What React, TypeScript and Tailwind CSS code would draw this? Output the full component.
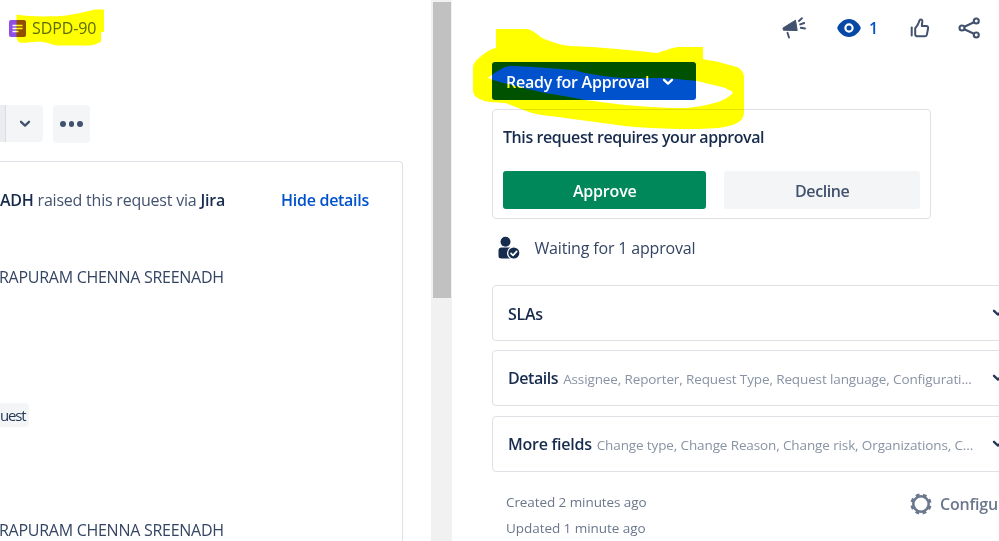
import { ReactNode } from 'react';

interface FieldPanel {
  title: string;
  titleClass: string;
  summary?: string;
}

const panels: FieldPanel[] = [
  { title: 'SLAs', titleClass: 'tracking-[-0.3px]' },
  {
    title: 'Details',
    titleClass: 'tracking-[-0.45px]',
    summary: 'Assignee, Reporter, Request Type, Request language, Configurati...'
  },
  {
    title: 'More fields',
    titleClass: 'tracking-[-0.25px]',
    summary: 'Change type, Change Reason, Change risk, Organizations, C...'
  }
];

function Chevron({ className }: { className?: string }) {
  return (
    <svg width="12" height="8" viewBox="0 0 12 8" fill="none" className={className}>
      <path d="M2 1.8 6 5.6l4-3.8" stroke="currentColor" strokeWidth="2.3" strokeLinecap="round" strokeLinejoin="round" />
    </svg>
  );
}

function MegaphoneIcon() {
  return (
    <svg width="24" height="24" viewBox="0 0 24 24" fill="none" className="text-[#42526e]">
      <path d="M13.500 4.200 15.200 14.500 1.400 14.200 1 12z" fill="currentColor" stroke="currentColor" strokeLinejoin="round" />
      <path d="m5.500 16.800 1.500 4.700M17 5l2.900-2.800M18.200 8.400l4-1.400M18.800 11.800l4.200.7" stroke="currentColor" strokeWidth="1.900" strokeLinecap="round" />
    </svg>
  );
}

function EyeIcon() {
  return (
    <svg width="24" height="20" viewBox="0 0 24 20">
      <path d="M12 1C6.500 1 2 5.500.5 9c-.3.700-.3 1.300 0 2C2 14.500 6.500 19 12 19s10-4.500 11.500-8c.3-.7.3-1.300 0-2C22 5.500 17.500 1 12 1z" fill="#0747a6" />
      <circle cx="12" cy="10" r="3.600" fill="#0747a6" stroke="#fff" strokeWidth="2.200" />
    </svg>
  );
}

function ThumbIcon() {
  return (
    <svg width="20" height="20" viewBox="0 0 20 20" fill="none" stroke="#42526e" strokeWidth="2" strokeLinecap="round" strokeLinejoin="round">
      <path d="M1.700 9.500v8" />
      <path d="M5.200 10.300v6c0 1.200.8 2 2 2h7.600c1.100 0 1.900-.7 2.100-1.700l1.200-6.400c.2-1.200-.6-2.200-1.800-2.200h-4.500l.5-4.300c.1-1.300-.5-2.300-1.500-2.300-.8 0-1.200.5-1.400 1.300C8.800 5.400 7.800 7 5.200 10.300z" />
    </svg>
  );
}

function ShareIcon() {
  return (
    <svg width="24" height="22" viewBox="0 0 24 22" fill="none" stroke="#42526e" strokeWidth="2.100">
      <circle cx="4" cy="11" r="2.500" />
      <circle cx="18.300" cy="4" r="2.500" />
      <circle cx="18.300" cy="18" r="2.500" />
      <path d="m6.400 9.800 9.500-4.600M6.400 12.200l9.500 4.600" />
    </svg>
  );
}

function ApproverIcon() {
  return (
    <svg width="23" height="24" viewBox="0 0 23 24">
      <circle cx="7.500" cy="5.700" r="5" fill="#172b4d" />
      <path d="M.5 14.500c0-1.900 1.200-3 3-3h8.500v11H3.500c-1.900 0-3-.8-3-2.500z" fill="#172b4d" />
      <circle cx="15.800" cy="17" r="6.200" fill="#172b4d" stroke="#fff" strokeWidth="1.300" />
      <path d="m13 17.300 2 2 3.700-4" fill="none" stroke="#fff" strokeWidth="1.700" strokeLinecap="round" strokeLinejoin="round" />
    </svg>
  );
}

function GearIcon() {
  return (
    <svg width="22" height="22" viewBox="-11 -11 22 22" fill="none" stroke="#6b778c">
      <circle r="7.700" strokeWidth="2.500" />
      <circle r="9.300" strokeWidth="2.600" strokeDasharray="3.800 3.504" strokeDashoffset="-1.752" />
    </svg>
  );
}

function ToolbarSlot({ className, children }: { className: string; children: ReactNode }) {
  return <button className={`flex h-6 items-center ${className}`}>{children}</button>;
}

/* Marker strokes drawn over the page */
function Highlights() {
  return (
    <svg width="999" height="541" viewBox="0 0 999 541" fill="#ffff00" className="pointer-events-none absolute inset-0 mix-blend-multiply">
      <path d="M16.500 14.500C32 17 48 16.500 60 16c12-.6 24-4 35-6.500h9V32h-3v10c-4 1.500-7 3-11 3.500H60c-8 0-12-3.500-20-3.800-7-.4-14 1.500-20 1-2-1-3.500-3-3.500-6z" />
      <path
        fillRule="evenodd"
        d="M496 29h31c8 2 10 6 17 10 9 3 16 6 26 7 30 1 58 4 87 7 8-2 13-5 21-6h25v12c8 2 13 2 19 4l15 4c4 2 7 5 7 10v35c0 6-3 9-7 11-6 3-12 4-19 5-14 1-26 1-40 1-18-1-35-1-53-3-20-3-40-5-60-8-12-2-22-2-33-5-10-3-18-7-27-10-9-1-17 0-23-3-6-2-9-5-9-10V68c0-4 3-8 7-11 5-4 10-8 16-9z
        M488 78c5-4 10-8 17-11 3-1 6-1 10-1 19 1 38 2 57 4 5 0 8 2 13 3 12 2 25 4 37 5h41c8 0 15 1 22 2 7 0 14 1 20 3l17 4c5 2 9 3 11 6-4 4-9 7-15 9-8 2-15 4-23 5-6 1-11 1-17 1-18 0-36-2-53-3-14-2-27-3-40-5-13-3-27-5-40-7-10-2-20-5-30-7-9-3-19-4-27-8z"
      />
    </svg>
  );
}

export default function App() {
  return (
    <div className="relative flex h-[541px] w-[999px] overflow-hidden bg-white font-['Open_Sans','Noto_Sans',sans-serif] text-[16px] leading-6 text-[#172b4d]">
      {/* Request side */}
      <div className="w-[431px] shrink-0 overflow-hidden whitespace-nowrap">
        <div className="flex h-[56px] items-center gap-[6px] pl-[9px]">
          <svg width="17" height="17" viewBox="0 0 17 17">
            <rect width="17" height="17" rx="2" fill="#904ee2" />
            <path d="M3.500 5.500h10M3.500 8.500h10M3.500 11.500h6" stroke="#fff" strokeWidth="1.300" />
          </svg>
          <span className="text-[16px] tracking-[-0.1px] text-[#5e6c84]">SDPD-90</span>
        </div>

        <div className="mt-[49px] flex h-[38px] gap-[10px]">
          <div className="flex h-[37px] w-[43px] rounded-r bg-[#f4f5f7]">
            <div className="w-[6px] border-r border-[#d9dce2] bg-[#ebecf0]" />
            <button className="flex flex-1 items-center justify-center text-[#42526e]">
              <Chevron />
            </button>
          </div>
          <button className="flex w-[37px] items-center justify-center gap-[3px] rounded bg-[#f4f5f7]">
            <span className="size-[5.500px] rounded-full bg-[#42526e]" />
            <span className="size-[5.500px] rounded-full bg-[#42526e]" />
            <span className="size-[5.500px] rounded-full bg-[#42526e]" />
          </button>
        </div>

        <div className="mt-[18px] h-[400px] w-[403px] rounded-tr border-t border-r border-[#dfe1e6]">
          <div className="mt-[26px] flex justify-between pr-[33px]">
            <p className="tracking-[-0.22px] text-[#42526e]">
              <b className="font-semibold text-[#172b4d]">ADH</b> raised this request via <b className="font-semibold text-[#172b4d]">Jira</b>
            </p>
            <a className="font-semibold tracking-[-0.28px] text-[#0052cc]">Hide details</a>
          </div>
          <p className="mt-[53px] -ml-px tracking-[-0.27px] text-[#344563]">RAPURAM CHENNA SREENADH</p>
          <div className="mt-[114px] flex">
            <span className="h-6 w-[29px] rounded-r bg-[#f4f5f7] text-[15px] tracking-[-1.2px] text-[#253858]">uest</span>
          </div>
          <p className="mt-[91px] -ml-px tracking-[-0.27px] text-[#344563]">RAPURAM CHENNA SREENADH</p>
        </div>
      </div>

      {/* Scrollbar */}
      <div className="w-[21px] shrink-0 bg-[#f1f1f1] px-[1.500px] pt-[2px]">
        <div className="h-[296px] bg-[#c1c1c1]" />
      </div>

      {/* Status side */}
      <div className="w-[547px] shrink-0 overflow-hidden pl-[40px] whitespace-nowrap">
        <div className="flex h-[62px] pt-4 pl-[290px]">
          <ToolbarSlot className="w-[55px]"><MegaphoneIcon /></ToolbarSlot>
          <ToolbarSlot className="w-[73px] gap-2 text-[#0052cc]">
            <EyeIcon />
            <span className="font-semibold">1</span>
          </ToolbarSlot>
          <ToolbarSlot className="w-[48px]"><ThumbIcon /></ToolbarSlot>
          <ToolbarSlot className="w-[24px]"><ShareIcon /></ToolbarSlot>
        </div>

        <button className="flex h-[38px] w-[204px] items-center rounded-[3px] bg-[#0052cc] pt-px pl-[14px] font-semibold text-white">
          <span className="w-[156px] text-left tracking-[-0.24px]">Ready for Approval</span>
          <Chevron />
        </button>

        <div className="mt-[9px] h-[110px] w-[439px] rounded border border-[#dfe1e6] px-[10px] pt-[15px]">
          <p className="font-semibold tracking-[-0.42px]">This request requires your approval</p>
          <div className="mt-[22px] flex h-[38px] gap-[18px] font-semibold">
            <button className="w-[204px] rounded-[3px] bg-[#00875a] pt-px tracking-[-0.2px] text-white">Approve</button>
            <button className="w-[196px] rounded-[3px] bg-[#f4f5f7] pt-px tracking-[-0.4px] text-[#42526e]">Decline</button>
          </div>
        </div>

        <div className="mt-[17px] flex h-6 items-center gap-[14px] pl-[5.500px]">
          <ApproverIcon />
          <span className="tracking-[-0.17px] text-[#344563]">Waiting for 1 approval</span>
        </div>

        <div className="mt-[25px] flex flex-col gap-[9.300px]">
          {panels.map((panel) => (
            <div key={panel.title} className="flex h-[56px] w-[540px] items-center rounded border border-[#dfe1e6] pl-[15px]">
              <div className="flex w-[484px] items-baseline gap-[5px] pt-px">
                <span className={`font-semibold text-[#172b4d] ${panel.titleClass}`}>{panel.title}</span>
                {panel.summary && <span className="text-[13.500px] tracking-[-0.12px] text-[#8993a4]">{panel.summary}</span>}
              </div>
              <Chevron className="shrink-0 text-[#253858]" />
            </div>
          ))}
        </div>

        <div className="mt-[17px] flex pl-[14px] text-[13.500px] leading-[26px] text-[#6b778c]">
          <div className="w-[404px] shrink-0">
            <p className="tracking-[-0.08px]">Created 2 minutes ago</p>
            <p className="tracking-[-0.05px]">Updated 1 minute ago</p>
          </div>
          <div className="flex h-[30px] shrink-0 items-center gap-2 text-[16px] font-semibold">
            <GearIcon />
            <span className="pt-px tracking-[-0.2px]">Configure</span>
          </div>
        </div>
      </div>

      <Highlights />
    </div>
  );
}
